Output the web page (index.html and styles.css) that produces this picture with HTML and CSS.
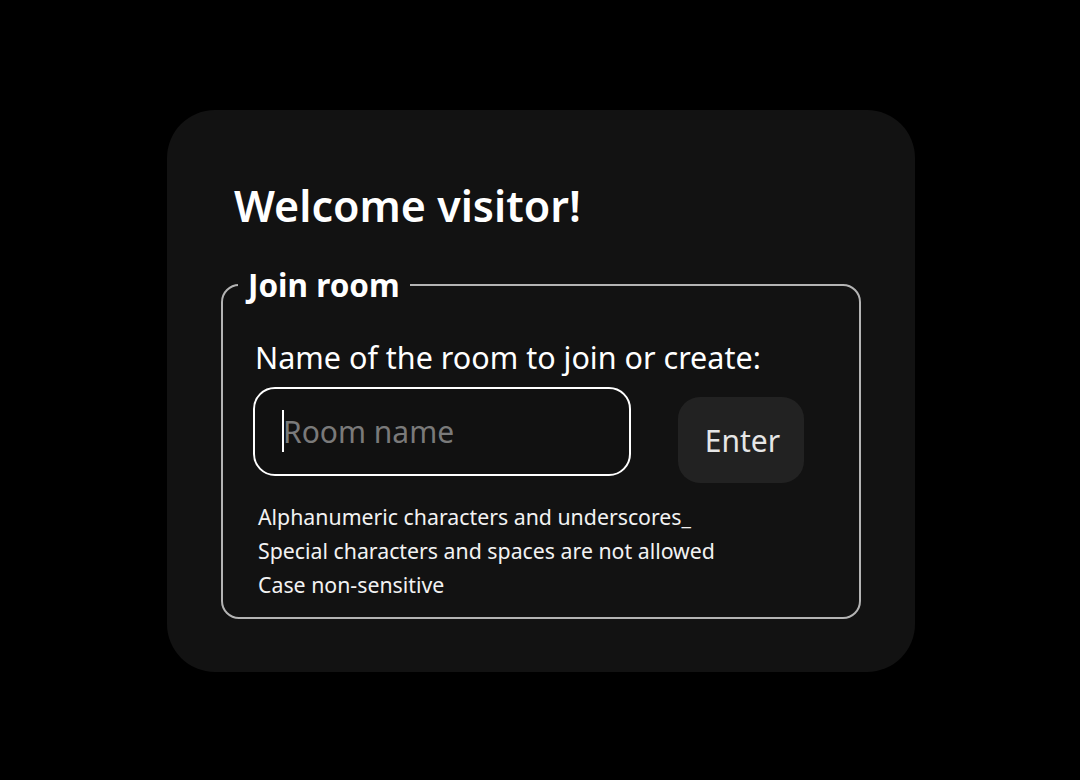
FILE: index.html
```html
<!DOCTYPE html>
<html lang="en">
<head>
<meta charset="utf-8">
<title>Welcome</title>
<link rel="stylesheet" href="styles.css">
</head>
<body>
<main class="card">
  <h1 class="title">Welcome visitor!</h1>
  <fieldset class="group">
    <legend class="legend">Join room</legend>
    <label class="label" for="room">Name of the room to join or create:</label>
    <div class="row">
      <div class="input-wrap">
        <span class="caret"></span>
        <input id="room" class="input" type="text" placeholder="Room name">
      </div>
      <button class="btn" type="button">Enter</button>
    </div>
    <ul class="hints">
      <li>Alphanumeric characters and underscores_</li>
      <li>Special characters and spaces are not allowed</li>
      <li>Case non-sensitive</li>
    </ul>
  </fieldset>
</main>
</body>
</html>
```

FILE: styles.css
```css
* { box-sizing: border-box; }
html, body {
  margin: 0;
  padding: 0;
  background: #000;
}
body {
  width: 1080px;
  height: 780px;
  padding: 2px 0 0 2px;
  display: flex;
  align-items: center;
  justify-content: center;
  font-family: "Noto Sans", "Open Sans", sans-serif;
  color: #fff;
}
.card {
  width: 748px;
  height: 562px;
  background: #121212;
  border-radius: 48px;
  padding: 61px 54px 0 54px;
}
.title {
  margin: 0 0 0 13px;
  font-size: 43px;
  font-weight: 600;
  line-height: 70px;
  color: #fff;
}
.group {
  margin: 26px 0 0 0;
  border: 2px solid #b4b4b4;
  border-radius: 18px;
  padding: 4px 32px 15px 32px;
  min-width: 0;
}
.legend {
  margin-left: -17px;
  padding: 0 10px 0 10px;
  font-size: 31.5px;
  font-weight: 700;
  line-height: 36px;
}
.label {
  display: block;
  font-size: 30.5px;
  line-height: 40px;
  color: #fff;
  margin: 30px 0 10px 0;
}
.row {
  display: flex;
  align-items: flex-start;
  gap: 47px;
}
.input-wrap {
  position: relative;
  width: 378px;
  height: 89px;
  margin-left: -2px;
}
.input {
  width: 100%;
  height: 100%;
  border: 2px solid #fff;
  border-radius: 22px;
  background: #111;
  padding: 0 0 0 28px;
  font-family: inherit;
  font-size: 30px;
  color: #fff;
  outline: none;
}
.input::placeholder {
  color: #7a7a7a;
}
.caret {
  position: absolute;
  left: 29px;
  top: 23px;
  width: 2px;
  height: 42px;
  background: #fff;
  z-index: 1;
}
.btn {
  margin-top: 10px;
  width: 126px;
  height: 86px;
  border: none;
  border-radius: 22px;
  background: #222;
  color: #e6e6e6;
  font-family: inherit;
  font-size: 30px;
  padding: 0 0 0 3px;
}
.hints {
  list-style: none;
  margin: 17px 0 0 3px;
  padding: 0;
  font-size: 21.3px;
  line-height: 34px;
  color: #f2f2f2;
}
```
